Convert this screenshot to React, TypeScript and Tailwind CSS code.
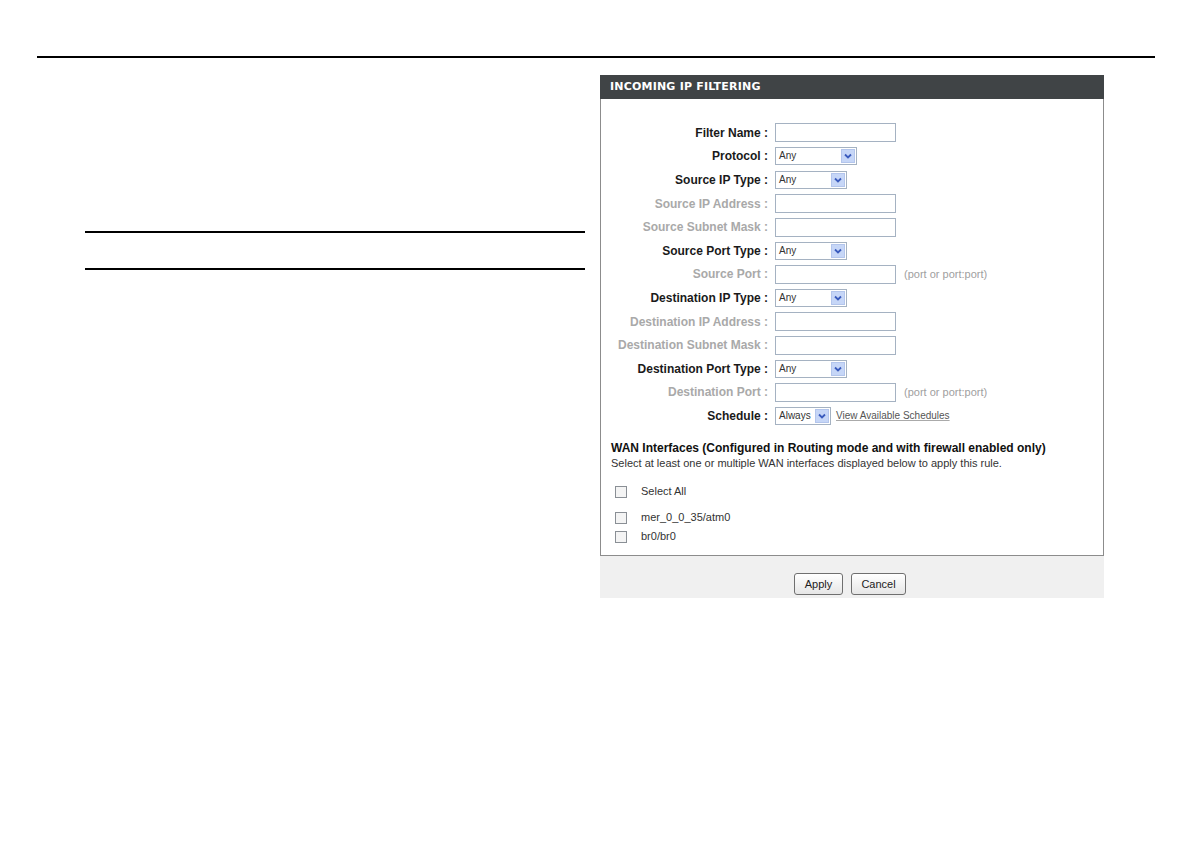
import React from 'react';

type Row = {
  label: string;
  kind: 'input' | 'select';
  active: boolean;
  width?: number;
  value?: string;
  hint?: string;
  link?: string;
};

const rows: Row[] = [
  { label: 'Filter Name :', kind: 'input', active: true },
  { label: 'Protocol :', kind: 'select', active: true, width: 82, value: 'Any' },
  { label: 'Source IP Type :', kind: 'select', active: true, width: 72, value: 'Any' },
  { label: 'Source IP Address :', kind: 'input', active: false },
  { label: 'Source Subnet Mask :', kind: 'input', active: false },
  { label: 'Source Port Type :', kind: 'select', active: true, width: 72, value: 'Any' },
  { label: 'Source Port :', kind: 'input', active: false, hint: '(port or port:port)' },
  { label: 'Destination IP Type :', kind: 'select', active: true, width: 72, value: 'Any' },
  { label: 'Destination IP Address :', kind: 'input', active: false },
  { label: 'Destination Subnet Mask :', kind: 'input', active: false },
  { label: 'Destination Port Type :', kind: 'select', active: true, width: 72, value: 'Any' },
  { label: 'Destination Port :', kind: 'input', active: false, hint: '(port or port:port)' },
  { label: 'Schedule :', kind: 'select', active: true, width: 56, value: 'Always', link: 'View Available Schedules' },
];

const SelectBox = ({ width, value }: { width: number; value: string }) => (
  <div
    className="h-[18px] border border-[#a5b2c2] bg-white flex items-center justify-between pl-[3px] pr-[1px]"
    style={{ width }}
  >
    <span className="text-[10px] text-[#333] leading-none">{value}</span>
    <span className="w-[14px] h-[14px] bg-[#c6d6f7] border border-[#b3c5ec] flex items-center justify-center">
      <svg width="8" height="6" viewBox="0 0 8 6">
        <path d="M1 1.5 L4 4.5 L7 1.5" fill="none" stroke="#3a5bbd" strokeWidth="1.8" />
      </svg>
    </span>
  </div>
);

const CheckBox = () => (
  <span className="w-[12px] h-[12px] border border-[#8a8f95] bg-[#f4f4f4] inline-block" />
);

export default function App() {
  return (
    <div
      className="w-[1190px] h-[843px] bg-white overflow-hidden"
      style={{ fontFamily: '"Liberation Sans", Arial, sans-serif' }}
    >
      {/* page rule */}
      <div className="pt-[56px] pl-[37px]">
        <div className="w-[1118px] h-[2px] bg-black" />
      </div>

      <div className="flex pt-[17px] pl-[85px]">
        {/* left column rules */}
        <div className="w-[500px] pt-[156px] flex flex-col gap-[35px]">
          <div className="h-[2px] bg-black" />
          <div className="h-[2px] bg-black" />
        </div>

        {/* panel */}
        <div className="ml-[15px] w-[504px]">
          <div className="h-[24px] bg-[#404446] flex items-center pl-[10px]">
            <span
              className="text-white font-bold text-[11px] tracking-[0.2px]"
              style={{ fontFamily: '"DejaVu Sans", Verdana, sans-serif' }}
            >
              INCOMING IP FILTERING
            </span>
          </div>

          <div className="border-x border-b border-[#8c8c8c] bg-white pt-[22px] h-[457px]">
            {rows.map((r) => (
              <div key={r.label} className="flex items-center h-[23.6px]">
                <div
                  className={`w-[167px] text-right text-[12px] font-bold whitespace-nowrap ${
                    r.active ? 'text-[#1a1a1a]' : 'text-[#a9a9a9]'
                  }`}
                >
                  {r.label}
                </div>
                <div className="ml-[7px] flex items-center">
                  {r.kind === 'input' ? (
                    <div className="w-[121px] h-[19px] border border-[#a5b2c2] bg-white" />
                  ) : (
                    <SelectBox width={r.width ?? 72} value={r.value ?? ''} />
                  )}
                  {r.hint && (
                    <span className="ml-[8px] text-[11px] text-[#a0a0a0]">{r.hint}</span>
                  )}
                  {r.link && (
                    <span className="ml-[5px] text-[10px] text-[#555] underline decoration-[#aaa]">
                      {r.link}
                    </span>
                  )}
                </div>
              </div>
            ))}

            <div className="pl-[10px] pt-[13px]">
              <div className="text-[12px] font-bold text-[#111] leading-[15px]">
                WAN Interfaces (Configured in Routing mode and with firewall enabled only)
              </div>
              <div className="text-[11px] text-[#333] leading-[15px]">
                Select at least one or multiple WAN interfaces displayed below to apply this rule.
              </div>

              <div className="mt-[14px] flex items-center h-[14px] pl-[4px]">
                <CheckBox />
                <span className="ml-[14px] text-[11px] text-[#333]">Select All</span>
              </div>
              <div className="mt-[12px] flex items-center h-[14px] pl-[4px]">
                <CheckBox />
                <span className="ml-[14px] text-[11px] text-[#333]">mer_0_0_35/atm0</span>
              </div>
              <div className="mt-[5px] flex items-center h-[14px] pl-[4px]">
                <CheckBox />
                <span className="ml-[14px] text-[11px] text-[#333]">br0/br0</span>
              </div>
            </div>
          </div>

          <div className="h-[42px] bg-[#f0f0f0] flex justify-center gap-[8px] pt-[17px]">
            <button className="h-[22px] w-[49px] ml-[-4px] border border-[#6f6f6f] rounded-[3px] bg-gradient-to-b from-white to-[#e6e6e6] text-[11px] text-[#222]">
              Apply
            </button>
            <button className="h-[22px] w-[55px] border border-[#6f6f6f] rounded-[3px] bg-gradient-to-b from-white to-[#e6e6e6] text-[11px] text-[#222]">
              Cancel
            </button>
          </div>
        </div>
      </div>
    </div>
  );
}
